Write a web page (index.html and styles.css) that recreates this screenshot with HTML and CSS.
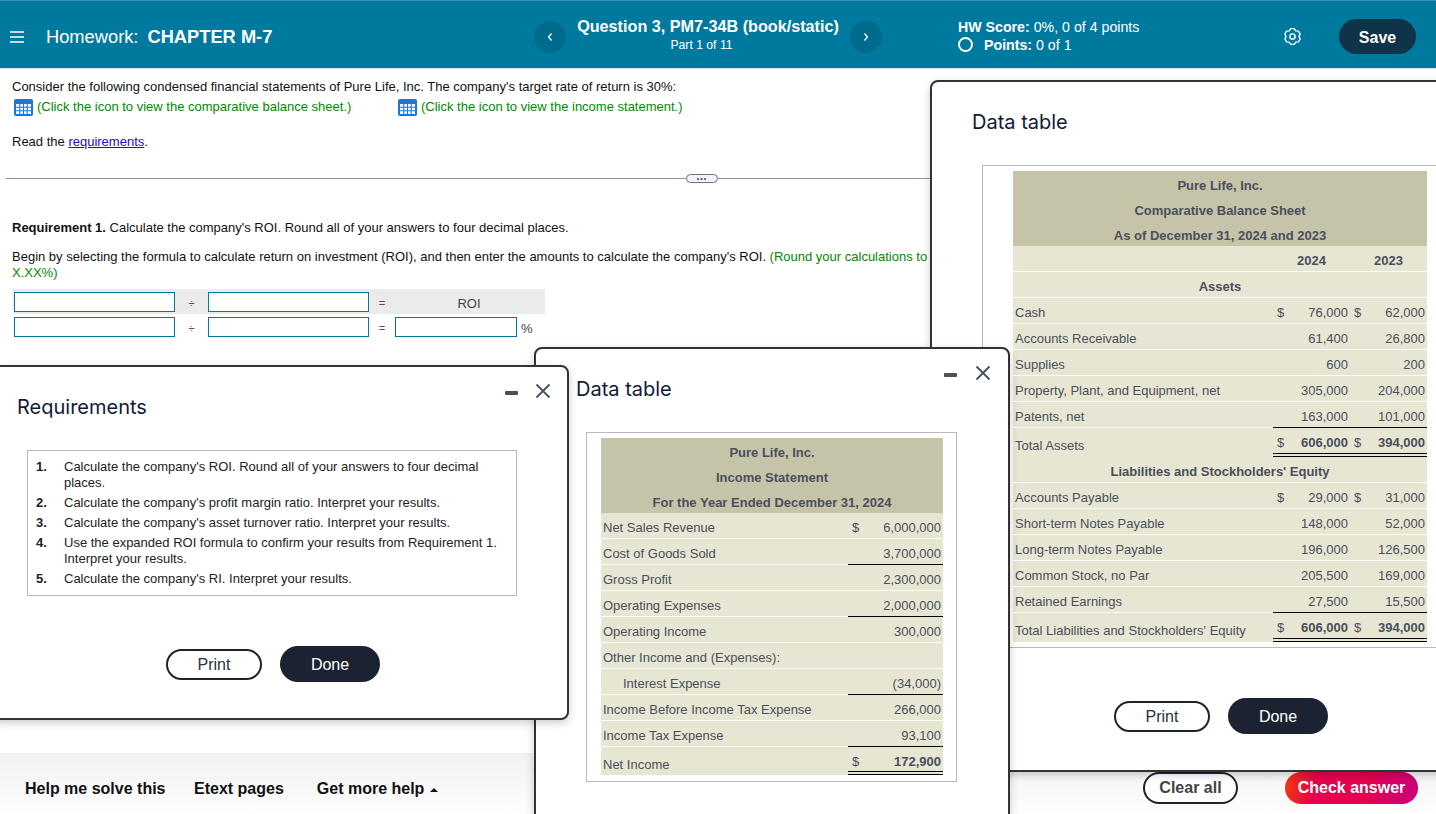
FILE: index.html
```html
<!DOCTYPE html>
<html lang="en">
<head>
<meta charset="utf-8">
<title>Homework: CHAPTER M-7</title>
<link rel="stylesheet" href="styles.css">
</head>
<body>
<div class="page">
  <header class="topbar">
    <div class="tb-left">
      <svg class="burger" viewBox="0 0 14 12" width="14" height="12"><path d="M0 1h14M0 6h14M0 11h14" stroke="#fff" stroke-width="1.3" fill="none"/></svg>
      <span class="hw">Homework:</span><strong class="hw-name">CHAPTER M-7</strong>
    </div>
    <div class="tb-mid">
      <span class="circle"><svg viewBox="0 0 6 10" width="6" height="10"><path d="M4.5 1.5 1.5 5l3 3.5" stroke="#fff" stroke-width="1.3" fill="none"/></svg></span>
      <div class="q"><div class="q-title">Question 3, PM7-34B (book/static)</div><div class="q-part">Part 1 of 11</div></div>
      <span class="circle"><svg viewBox="0 0 6 10" width="6" height="10"><path d="M1.5 1.5 4.5 5l-3 3.5" stroke="#fff" stroke-width="1.3" fill="none"/></svg></span>
    </div>
    <div class="score">
      <div class="score-line"><b>HW Score:</b> 0%, 0 of 4 points</div>
      <div class="score-line points"><span class="ring"></span><span><b>Points:</b> 0 of 1</span></div>
    </div>
    <svg class="gear" viewBox="0 0 18 18" width="17" height="17"><path d="M7.23.69h3.54l1.68 2.33 2.87.29 1.76 3.06L15.900 9l1.180 2.630-1.760 3.060-2.870.290-1.680 2.330H7.230l-1.680-2.330-2.870-.290-1.760-3.060L2.100 9 .920 6.370l1.760-3.060 2.870-.290z" fill="none" stroke="#fff" stroke-width="1.500" stroke-linejoin="round"/><circle cx="9" cy="9" r="2.800" fill="none" stroke="#fff" stroke-width="1.500"/></svg>
    <button class="save">Save</button>
  </header>

  <main class="content">
    <p class="line first">Consider the following condensed financial statements of Pure Life, Inc. The company's target rate of return is 30%:</p>
    <div class="links">
      <span class="lnk lnk-a"><svg class="grid-ic" viewBox="0 0 19 17" width="19" height="17"><rect width="19" height="17" rx="2" fill="#1f74d8"/><path d="M2 5h15v10H2z" fill="#fff"/><path d="M5.800 5v10M9.500 5v10M13.200 5v10M2 8.300h15M2 11.700h15" stroke="#1f74d8" stroke-width="1.100"/></svg>(Click the icon to view the comparative balance sheet.)</span>
      <span class="lnk"><svg class="grid-ic" viewBox="0 0 19 17" width="19" height="17"><rect width="19" height="17" rx="2" fill="#1f74d8"/><path d="M2 5h15v10H2z" fill="#fff"/><path d="M5.800 5v10M9.500 5v10M13.200 5v10M2 8.300h15M2 11.700h15" stroke="#1f74d8" stroke-width="1.100"/></svg>(Click the icon to view the income statement.)</span>
    </div>
    <p class="line read">Read the <a href="#" class="req-link">requirements</a>.</p>
    <div class="divider"><span class="rule"></span><span class="pill">&#8226;&#8226;&#8226;</span><span class="rule"></span></div>
    <p class="line req1"><b>Requirement 1.</b> Calculate the company's ROI. Round all of your answers to four decimal places.</p>
    <p class="line begin">Begin by selecting the formula to calculate return on investment (ROI), and then enter the amounts to calculate the company's ROI. <span class="green">(Round your calculations to X.XX%)</span></p>
    <div class="formula">
      <div class="f-row f-head">
        <input class="box wide"><span class="op">&divide;</span><input class="box wide"><span class="op op-eq">=</span><span class="f-res">ROI</span>
      </div>
      <div class="f-row">
        <input class="box wide"><span class="op">&divide;</span><input class="box wide"><span class="op op-eq">=</span><input class="box res"><span class="pct">%</span>
      </div>
    </div>
  </main>

  <footer class="foot">
    <div class="foot-links"><b>Help me solve this</b><b>Etext pages</b><b class="more">Get more help <span class="tri"></span></b></div>
    <div class="foot-actions"><button class="clear">Clear all</button><button class="check">Check answer</button></div>
  </footer>

  <section class="win win-bal">
    <h2 class="win-title">Data table</h2>
    <div class="tbl-frame">
      <table class="stmt bal">
        <colgroup><col class="c-lab"><col class="c-s1"><col class="c-v1"><col class="c-s2"><col class="c-v2"></colgroup>
        <tr class="hd"><td colspan="5">Pure Life, Inc.</td></tr>
        <tr class="hd"><td colspan="5">Comparative Balance Sheet</td></tr>
        <tr class="hd"><td colspan="5">As of December 31, 2024 and 2023</td></tr>
        <tr class="yr"><td></td><td colspan="2">2024</td><td colspan="2">2023</td></tr>
        <tr class="sec"><td colspan="5">Assets</td></tr>
        <tr><td>Cash</td><td class="s">$</td><td class="v">76,000</td><td class="s">$</td><td class="v">62,000</td></tr>
        <tr><td>Accounts Receivable</td><td class="s"></td><td class="v">61,400</td><td class="s"></td><td class="v">26,800</td></tr>
        <tr><td>Supplies</td><td class="s"></td><td class="v">600</td><td class="s"></td><td class="v">200</td></tr>
        <tr><td>Property, Plant, and Equipment, net</td><td class="s"></td><td class="v">305,000</td><td class="s"></td><td class="v">204,000</td></tr>
        <tr class="under"><td>Patents, net</td><td class="s"></td><td class="v">163,000</td><td class="s"></td><td class="v">101,000</td></tr>
        <tr class="total"><td>Total Assets</td><td class="s">$</td><td class="v">606,000</td><td class="s">$</td><td class="v">394,000</td></tr>
        <tr class="sec"><td colspan="5">Liabilities and Stockholders' Equity</td></tr>
        <tr><td>Accounts Payable</td><td class="s">$</td><td class="v">29,000</td><td class="s">$</td><td class="v">31,000</td></tr>
        <tr><td>Short-term Notes Payable</td><td class="s"></td><td class="v">148,000</td><td class="s"></td><td class="v">52,000</td></tr>
        <tr><td>Long-term Notes Payable</td><td class="s"></td><td class="v">196,000</td><td class="s"></td><td class="v">126,500</td></tr>
        <tr><td>Common Stock, no Par</td><td class="s"></td><td class="v">205,500</td><td class="s"></td><td class="v">169,000</td></tr>
        <tr class="under"><td>Retained Earnings</td><td class="s"></td><td class="v">27,500</td><td class="s"></td><td class="v">15,500</td></tr>
        <tr class="total"><td>Total Liabilities and Stockholders' Equity</td><td class="s">$</td><td class="v">606,000</td><td class="s">$</td><td class="v">394,000</td></tr>
      </table>
    </div>
    <div class="win-btns"><button class="print">Print</button><button class="done">Done</button></div>
  </section>

  <section class="win win-inc">
    <div class="win-ctl">
      <span class="minus"></span>
      <svg viewBox="0 0 16 16" width="16" height="16"><path d="M1.500 1.500l13 13M14.500 1.500l-13 13" stroke="#46505c" stroke-width="1.800" fill="none"/></svg>
    </div>
    <h2 class="win-title">Data table</h2>
    <div class="tbl-frame">
      <table class="stmt inc">
        <colgroup><col class="i-lab"><col class="i-s"><col class="i-v"></colgroup>
        <tr class="hd"><td colspan="3">Pure Life, Inc.</td></tr>
        <tr class="hd"><td colspan="3">Income Statement</td></tr>
        <tr class="hd"><td colspan="3">For the Year Ended December 31, 2024</td></tr>
        <tr><td>Net Sales Revenue</td><td class="s">$</td><td class="v">6,000,000</td></tr>
        <tr class="under"><td>Cost of Goods Sold</td><td class="s"></td><td class="v">3,700,000</td></tr>
        <tr><td>Gross Profit</td><td class="s"></td><td class="v">2,300,000</td></tr>
        <tr class="under"><td>Operating Expenses</td><td class="s"></td><td class="v">2,000,000</td></tr>
        <tr><td>Operating Income</td><td class="s"></td><td class="v">300,000</td></tr>
        <tr><td>Other Income and (Expenses):</td><td class="s"></td><td class="v"></td></tr>
        <tr class="under"><td class="ind">Interest Expense</td><td class="s"></td><td class="v">(34,000)</td></tr>
        <tr><td>Income Before Income Tax Expense</td><td class="s"></td><td class="v">266,000</td></tr>
        <tr class="under"><td>Income Tax Expense</td><td class="s"></td><td class="v">93,100</td></tr>
        <tr class="total"><td>Net Income</td><td class="s">$</td><td class="v">172,900</td></tr>
      </table>
    </div>
  </section>

  <section class="win win-req">
    <div class="win-ctl">
      <span class="minus"></span>
      <svg viewBox="0 0 16 16" width="16" height="16"><path d="M1.500 1.500l13 13M14.500 1.500l-13 13" stroke="#46505c" stroke-width="1.800" fill="none"/></svg>
    </div>
    <h2 class="win-title">Requirements</h2>
    <ol class="req-list">
      <li><b>1.</b><span>Calculate the company's ROI. Round all of your answers to four decimal places.</span></li>
      <li><b>2.</b><span>Calculate the company's profit margin ratio. Interpret your results.</span></li>
      <li><b>3.</b><span>Calculate the company's asset turnover ratio. Interpret your results.</span></li>
      <li><b>4.</b><span>Use the expanded ROI formula to confirm your results from Requirement 1. Interpret your results.</span></li>
      <li><b>5.</b><span>Calculate the company's RI. Interpret your results.</span></li>
    </ol>
    <div class="win-btns"><button class="print">Print</button><button class="done">Done</button></div>
  </section>
</div>
</body>
</html>
```
FILE: styles.css
```css
* { box-sizing: border-box; }
html, body { margin: 0; padding: 0; height: 814px; overflow: hidden; background: #fff; }
body { font-family: "Liberation Sans", Arial, sans-serif; color: #111; font-size: 13px; }
button { font-family: inherit; cursor: pointer; }
.page { position: relative; width: 1436px; height: 814px; overflow: hidden; display: flex; flex-direction: column; }

/* top bar */
.topbar { height: 69px; flex: none; padding-top: 4px; background: #00799f; border-top: 1px solid #3f93b0; border-bottom: 1px solid #d5e3ea; color: #fff; display: flex; align-items: center; }
.tb-left { width: 534px; display: flex; align-items: center; padding-left: 10px; font-size: 18.3px; }
.burger { margin-right: 22px; }
.hw { margin-right: 9px; }
.hw-name { font-weight: 700; }
.tb-mid { width: 348px; display: flex; align-items: center; justify-content: space-between; }
.circle { width: 32px; height: 32px; border-radius: 50%; background: #006a8c; display: flex; align-items: center; justify-content: center; }
.q { text-align: center; margin-top: -5px; }
.q-title { font-size: 16.2px; font-weight: 700; line-height: 20px; }
.q-part { font-size: 12.2px; line-height: 16px; margin-top: 1px; padding-right: 13px; }
.score { margin-left: 76px; margin-bottom: 2px; width: 326px; font-size: 14.2px; line-height: 18px; }
.score-line b { font-weight: 700; }
.points { display: flex; align-items: center; gap: 11px; }
.ring { width: 15px; height: 15px; border: 2px solid #fff; border-radius: 50%; }
.gear { margin-right: 38px; }
.save { width: 77px; height: 35px; border: 0; border-radius: 18px; background: #0f3349; color: #fff; font-size: 16px; font-weight: 700; padding: 2px 0 0; }

/* question */
.content { flex: 1; padding: 0 0 0 12px; }
.line { margin: 0; line-height: 16px; font-size: 13px; }
.first { margin-top: 10px; }
.links { display: flex; margin-top: 4px; height: 16px; line-height: 16px; color: #008a00; }
.lnk { display: flex; align-items: center; margin-left: 2px; }
.lnk-a { width: 382px; }
.grid-ic { margin-right: 4px; flex: none; }
.read { margin-top: 19px; }
.req-link { color: #2a00e0; }
.divider { display: flex; align-items: center; height: 10px; margin: 23px 38px 0 -6px; }
.rule { flex: 1; height: 1px; background: #8a94a6; }
.pill { width: 32px; height: 9px; border: 1px solid #68748a; border-radius: 5px; background: #f2f4f7; font-size: 7px; line-height: 7px; letter-spacing: 1px; text-align: center; color: #445; }
.req1 { margin-top: 37px; }
.begin { margin-top: 13px; width: 916px; }
.green { color: #008a00; }
.formula { margin-top: 8px; margin-left: 1px; width: 532px; }
.f-row { height: 25px; display: flex; align-items: center; padding-left: 1px; }
.f-row + .f-row { margin-top: 3px; height: 20px; }
.f-head { background: #ebebeb; }
.box { height: 20px; border: 1px solid #00789f; background: #fff; padding: 0; border-radius: 0; outline: none; flex: none; }
.wide { width: 161px; }
.res { width: 122px; }
.op { width: 33px; flex: none; text-align: center; font-size: 11px; color: #555; padding-top: 2px; }
.op-eq { width: 26px; }
.f-res { width: 150px; flex: none; text-align: center; color: #444; padding: 3px 2px 0 0; }
.pct { margin-left: 4px; color: #444; padding-top: 3px; }

/* footer */
.foot { height: 61px; flex: none; background: linear-gradient(#f1f1f1, #fdfdfd); display: flex; align-items: center; justify-content: space-between; padding: 8px 18px 0 25px; }
.foot-links { display: flex; font-size: 16px; color: #111; padding-top: 3px; }
.foot-links b { margin-right: 28.5px; }
.foot-links .more { margin-left: 4.5px; }
.tri { display: inline-block; width: 0; height: 0; border-left: 4px solid transparent; border-right: 4px solid transparent; border-bottom: 4px solid #111; vertical-align: 2px; margin-left: 1px; }
.foot-actions { display: flex; gap: 47px; }
.clear { width: 95px; height: 32px; border: 2px solid #1b2232; border-radius: 16px; background: #fff; color: #444; font-size: 16px; font-weight: 700; padding: 1px 0 0; }
.check { width: 133px; height: 32px; border: 0; border-radius: 16px; background: linear-gradient(100deg, #f2380f, #e6004e 25%, #e6004e 60%, #c8007c); color: #fff; font-size: 16px; font-weight: 700; padding: 1px 0 0; }

/* windows */
.win { position: absolute; background: #fff; border: 2px solid #333; border-radius: 8px; box-shadow: 0 3px 8px rgba(0,0,0,.2); }
.win-title { margin: 0; font-family: Inter, "Liberation Sans", sans-serif; font-weight: 400; font-size: 20px; line-height: 26px; color: #101a38; }
.win-ctl { position: absolute; display: flex; align-items: center; gap: 18px; }
.minus { width: 13px; height: 4px; margin-top: 4px; background: #4c4f55; border-radius: 1px; }

.win-bal { left: 930px; top: 80px; width: 600px; height: 692px; padding: 27px 0 0 40px; }
.win-bal .tbl-frame { margin: 30px 0 0 10px; width: 560px; height: 483px; padding: 5px 0 0 30px; }
.tbl-frame { border: 1px solid #b9b9b9; }
.win-btns { display: flex; align-items: center; justify-content: center; gap: 18px; }
.win-bal .win-btns { width: 214px; margin: 50px 0 0 142px; }

.win-inc { left: 534px; top: 347px; width: 476px; height: 560px; padding: 27px 0 0 40px; }
.win-inc .win-ctl { top: 16px; left: 408px; }
.win-inc .tbl-frame { margin: 30px 0 0 10px; width: 371px; height: 350px; padding: 5px 0 0 14px; }

.win-req { left: -10px; top: 365px; width: 579px; height: 355px; padding: 27px 0 0 25px; }
.win-req .win-ctl { top: 16px; left: 513px; gap: 17px; }
.req-list { list-style: none; margin: 30px 0 0 10px; padding: 8px 10px 8px 8px; width: 490px; height: 146px; border: 1px solid #b9b9b9; font-size: 13px; line-height: 16px; color: #222; }
.req-list li { display: flex; margin-bottom: 4px; }
.req-list b { width: 28px; flex: none; }
.win-req .win-btns { width: 214px; margin: 50px 0 0 149px; }

.print { width: 96px; height: 31px; border: 2px solid #1b2232; border-radius: 16px; background: #fff; color: #2b3040; font-size: 16px; padding: 1px 0 0; flex: none; }
.done { width: 100px; height: 36px; border: 0; border-radius: 18px; background: #1b2232; color: #fff; font-size: 16px; padding: 1px 0 0; flex: none; }

/* statements */
.stmt { border-collapse: separate; border-spacing: 0; table-layout: fixed; color: #4a4f5e; font-size: 13px; line-height: 15px; }
.stmt td { height: 26px; padding: 4px 2px 0; background: #e6e6d2; border-bottom: 1px solid #fff; white-space: nowrap; vertical-align: middle; }
.stmt .hd td { height: 25px; background: #c5c4a9; border-bottom: 0; text-align: center; font-weight: 700; }
.stmt .yr td { text-align: center; font-weight: 700; }
.stmt .sec td { text-align: center; font-weight: 700; }
.stmt .s { padding: 4px 0 0 4px; }
.stmt .v { text-align: right; }
.stmt .under .s, .stmt .under .v { border-bottom-color: #000; }
.stmt .total td { height: 29px; padding-top: 6px; border-bottom: 0; }
.stmt .total .s, .stmt .total .v { padding-top: 4px; font-weight: 700; border-bottom: 4px double #000; }
.stmt .total .s { font-weight: 400; }
.stmt .ind { padding-left: 22px; }
.stmt.inc .total td { height: 28px; }
.c-lab { width: 260px; } .c-s1 { width: 19px; } .c-v1 { width: 58px; } .c-s2 { width: 20px; } .c-v2 { width: 57px; }
.bal { width: 414px; }
.i-lab { width: 247px; } .i-s { width: 20px; } .i-v { width: 75px; }
.inc { width: 342px; }
```
